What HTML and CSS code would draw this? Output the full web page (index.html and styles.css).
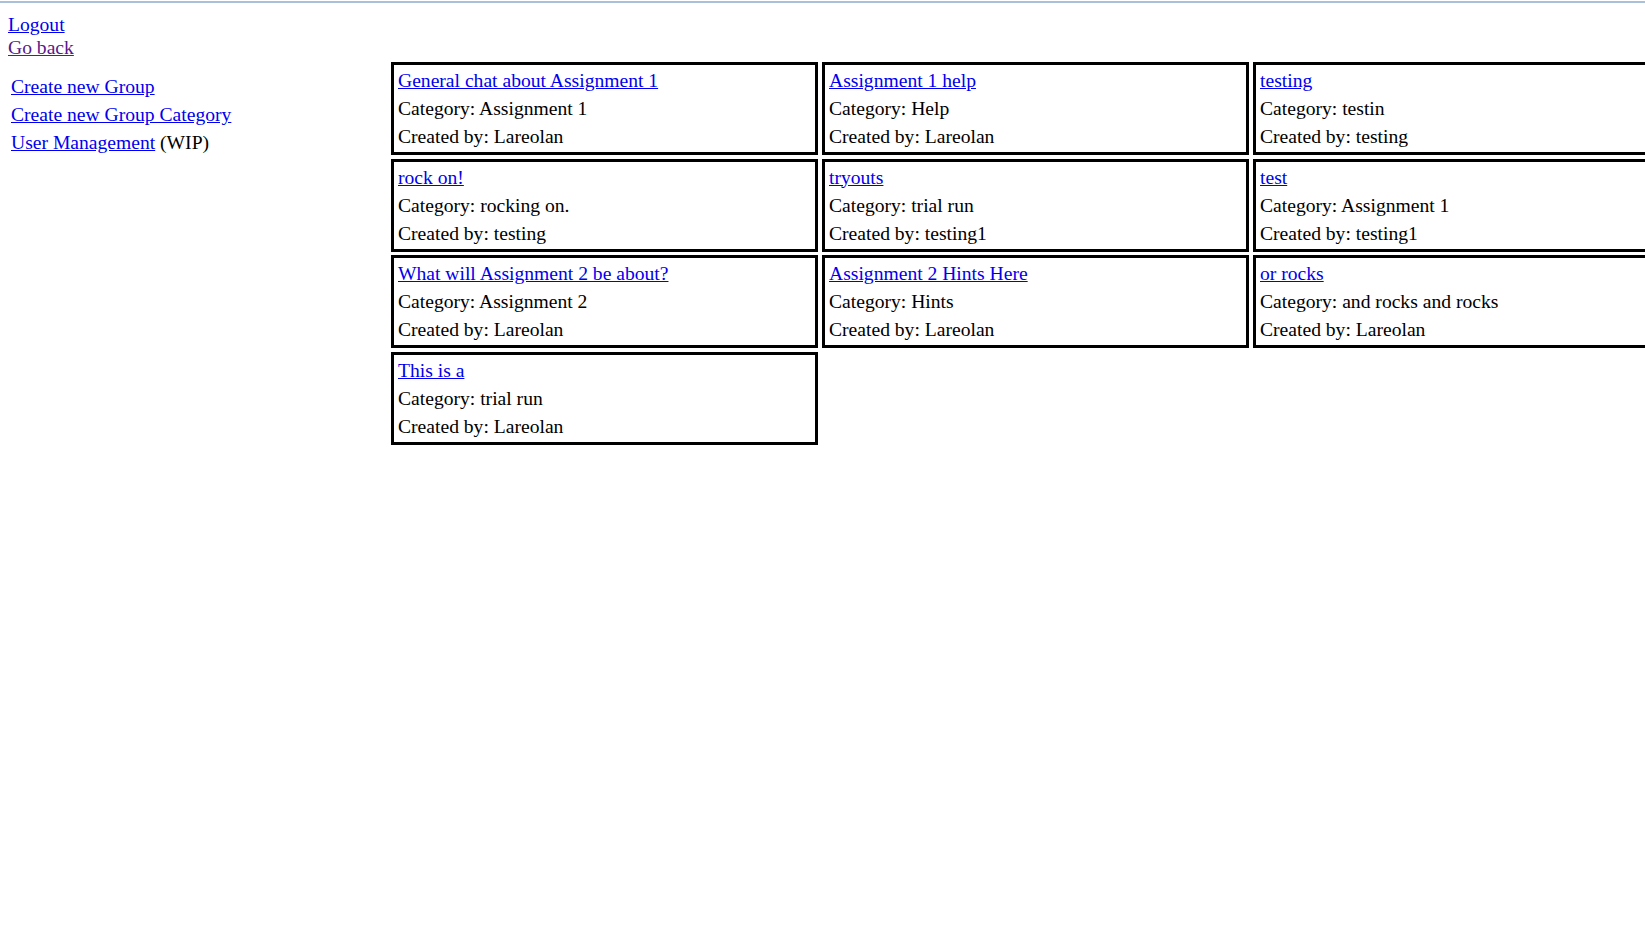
FILE: index.html
```html
<!DOCTYPE html>
<html>
<head>
<meta charset="utf-8">
<title>Groups</title>
<link rel="stylesheet" href="styles.css">
</head>
<body>
<div class="topline"></div>
<div class="header">
  <a class="link" href="#logout">Logout</a>
  <a class="link visited" href="#back">Go back</a>
</div>
<div class="main">
  <div class="sidebar">
    <div class="side-item"><a class="link" href="#new-group">Create new Group</a></div>
    <div class="side-item"><a class="link" href="#new-category">Create new Group Category</a></div>
    <div class="side-item"><a class="link" href="#users">User Management</a> (WIP)</div>
  </div>
  <div class="grid">
    <div class="card">
      <div class="line"><a class="link" href="#g1">General chat about Assignment 1</a></div>
      <div class="line">Category: Assignment 1</div>
      <div class="line">Created by: Lareolan</div>
    </div>
    <div class="card">
      <div class="line"><a class="link" href="#g2">Assignment 1 help</a></div>
      <div class="line">Category: Help</div>
      <div class="line">Created by: Lareolan</div>
    </div>
    <div class="card">
      <div class="line"><a class="link" href="#g3">testing</a></div>
      <div class="line">Category: testin</div>
      <div class="line">Created by: testing</div>
    </div>
    <div class="card">
      <div class="line"><a class="link" href="#g4">rock on!</a></div>
      <div class="line">Category: rocking on.</div>
      <div class="line">Created by: testing</div>
    </div>
    <div class="card">
      <div class="line"><a class="link" href="#g5">tryouts</a></div>
      <div class="line">Category: trial run</div>
      <div class="line">Created by: testing1</div>
    </div>
    <div class="card">
      <div class="line"><a class="link" href="#g6">test</a></div>
      <div class="line">Category: Assignment 1</div>
      <div class="line">Created by: testing1</div>
    </div>
    <div class="card">
      <div class="line"><a class="link" href="#g7">What will Assignment 2 be about?</a></div>
      <div class="line">Category: Assignment 2</div>
      <div class="line">Created by: Lareolan</div>
    </div>
    <div class="card">
      <div class="line"><a class="link" href="#g8">Assignment 2 Hints Here</a></div>
      <div class="line">Category: Hints</div>
      <div class="line">Created by: Lareolan</div>
    </div>
    <div class="card">
      <div class="line"><a class="link" href="#g9">or rocks</a></div>
      <div class="line">Category: and rocks and rocks</div>
      <div class="line">Created by: Lareolan</div>
    </div>
    <div class="card">
      <div class="line"><a class="link" href="#g10">This is a</a></div>
      <div class="line">Category: trial run</div>
      <div class="line">Created by: Lareolan</div>
    </div>
  </div>
</div>
</body>
</html>
```

FILE: styles.css
```css
html {
  overflow: hidden;
  background: #ffffff;
}

body {
  margin: 0;
  font-family: "Liberation Serif", "Times New Roman", serif;
  font-size: 19.6px;
  color: #000000;
}

.topline {
  margin-top: 1px;
  height: 2px;
  background: #a9bfda;
}

.header {
  display: flex;
  flex-direction: column;
  align-items: flex-start;
  padding: 10px 0 0 8px;
  line-height: 23px;
}

.link {
  color: #0000ee;
  text-decoration: underline;
}

.link.visited {
  color: #551a8b;
}

.main {
  display: flex;
  align-items: flex-start;
  margin-top: 3px;
}

.sidebar {
  flex: 0 0 391px;
  box-sizing: border-box;
  padding: 11px 0 0 11px;
  line-height: 28px;
}

.grid {
  display: grid;
  grid-template-columns: repeat(3, 427px);
  column-gap: 4px;
  row-gap: 3.5px;
  flex: 0 0 auto;
}

.card {
  border: 3px solid #000000;
  padding: 2px 4px 1px;
  line-height: 28px;
  white-space: nowrap;
}
```
